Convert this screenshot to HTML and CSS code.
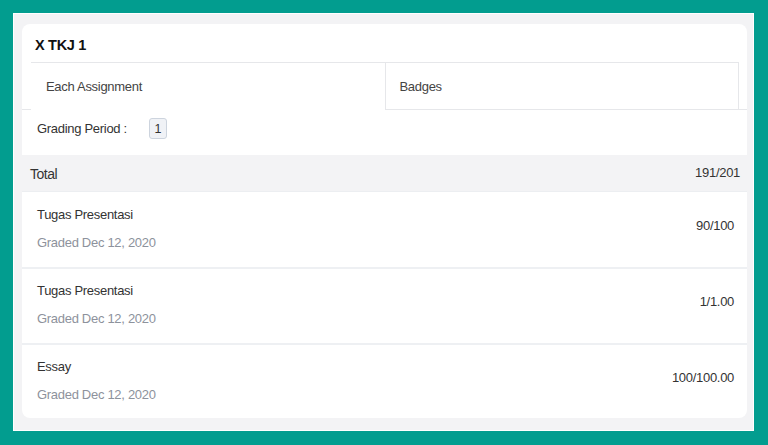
FILE: index.html
```html
<!DOCTYPE html>
<html lang="en">

<head>
    <meta charset="utf-8">
    <title>Grades</title>
    <link rel="stylesheet" href="styles.css">
</head>

<body>
    <div class="frame">
        <div class="card">
            <h1 class="class-name">X TKJ 1</h1>

            <div class="tabs">
                <a class="tab active">Each Assignment</a>
                <a class="tab">Badges</a>
            </div>

            <div class="period">
                <span>Grading Period :</span>
                <span class="period-box">1</span>
            </div>

            <div class="total">
                <span class="total-label">Total</span>
                <span class="total-score">191/201</span>
            </div>

            <div class="grade">
                <div class="grade-info">
                    <p class="grade-name">Tugas Presentasi</p>
                    <p class="grade-date">Graded Dec 12, 2020</p>
                </div>
                <span class="grade-score">90/100</span>
            </div>

            <div class="grade">
                <div class="grade-info">
                    <p class="grade-name">Tugas Presentasi</p>
                    <p class="grade-date">Graded Dec 12, 2020</p>
                </div>
                <span class="grade-score">1/1.00</span>
            </div>

            <div class="grade">
                <div class="grade-info">
                    <p class="grade-name">Essay</p>
                    <p class="grade-date">Graded Dec 12, 2020</p>
                </div>
                <span class="grade-score">100/100.00</span>
            </div>
        </div>
    </div>
</body>

</html>
```

FILE: styles.css
```css
html, body {
    margin: 0;
    height: 100%;
}

body {
    background-color: #029d8f;
    font-family: "Liberation Sans", Arial, sans-serif;
    font-size: 13px;
    letter-spacing: -0.3px;
    color: #333;
    padding: 13px 14px 14px 13px;
    box-sizing: border-box;
}

.frame {
    height: 100%;
    box-sizing: border-box;
    background-color: #f3f3f5;
    border: 1px solid #fff;
    padding: 10px 6px 12px 8px;
}

.card {
    height: 100%;
    background-color: #fff;
    border-radius: 8px;
    overflow: hidden;
}

.class-name {
    margin: 0;
    padding: 12px 13px 8px;
    font-size: 14.5px;
    line-height: 18px;
    letter-spacing: -0.3px;
    font-weight: bold;
    color: #111;
}

.tabs {
    display: flex;
    padding: 0 8px 0 9px;
    border-bottom: 1px solid #e6e7ea;
}

.tab {
    flex: 1 1 0;
    display: flex;
    align-items: center;
    height: 46px;
    padding-left: 15px;
    border-top: 1px solid #e6e7ea;
    color: #444;
}

.tab + .tab {
    border-left: 1px solid #e6e7ea;
    border-right: 1px solid #e6e7ea;
    padding-left: 14px;
}

.tab.active {
    margin-bottom: -1px;
    border-bottom: 1px solid #fff;
}

.period {
    display: flex;
    align-items: center;
    gap: 22px;
    height: 45px;
    box-sizing: border-box;
    padding: 0 15px 8px;
    color: #333;
}

.period-box {
    display: inline-flex;
    align-items: center;
    justify-content: center;
    width: 16px;
    height: 19px;
    border: 1px solid #cdd4de;
    border-radius: 3px;
    background-color: #f0f2f6;
    font-size: 12.5px;
    letter-spacing: 0;
}

.total {
    display: flex;
    justify-content: space-between;
    align-items: center;
    height: 36px;
    padding: 0 7px 0 8px;
    background-color: #f3f3f5;
    border-bottom: 1px solid #eceef1;
}

.total-label {
    font-size: 14px;
    letter-spacing: -0.5px;
    padding-top: 1px;
}

.total-score {
    padding-bottom: 2px;
}

.grade {
    display: flex;
    justify-content: space-between;
    align-items: center;
    height: 75px;
    box-sizing: border-box;
    padding: 0 13px 0 15px;
}

.grade + .grade {
    border-top: 2px solid #eef0f3;
    height: 76px;
}

.grade-info {
    display: flex;
    flex-direction: column;
    gap: 12px;
    padding-bottom: 2px;

    p {
        margin: 0;
        line-height: 16px;
    }
}

.grade-date {
    color: #8d929c;
}

.grade-score {
    padding-bottom: 9px;
}
```
